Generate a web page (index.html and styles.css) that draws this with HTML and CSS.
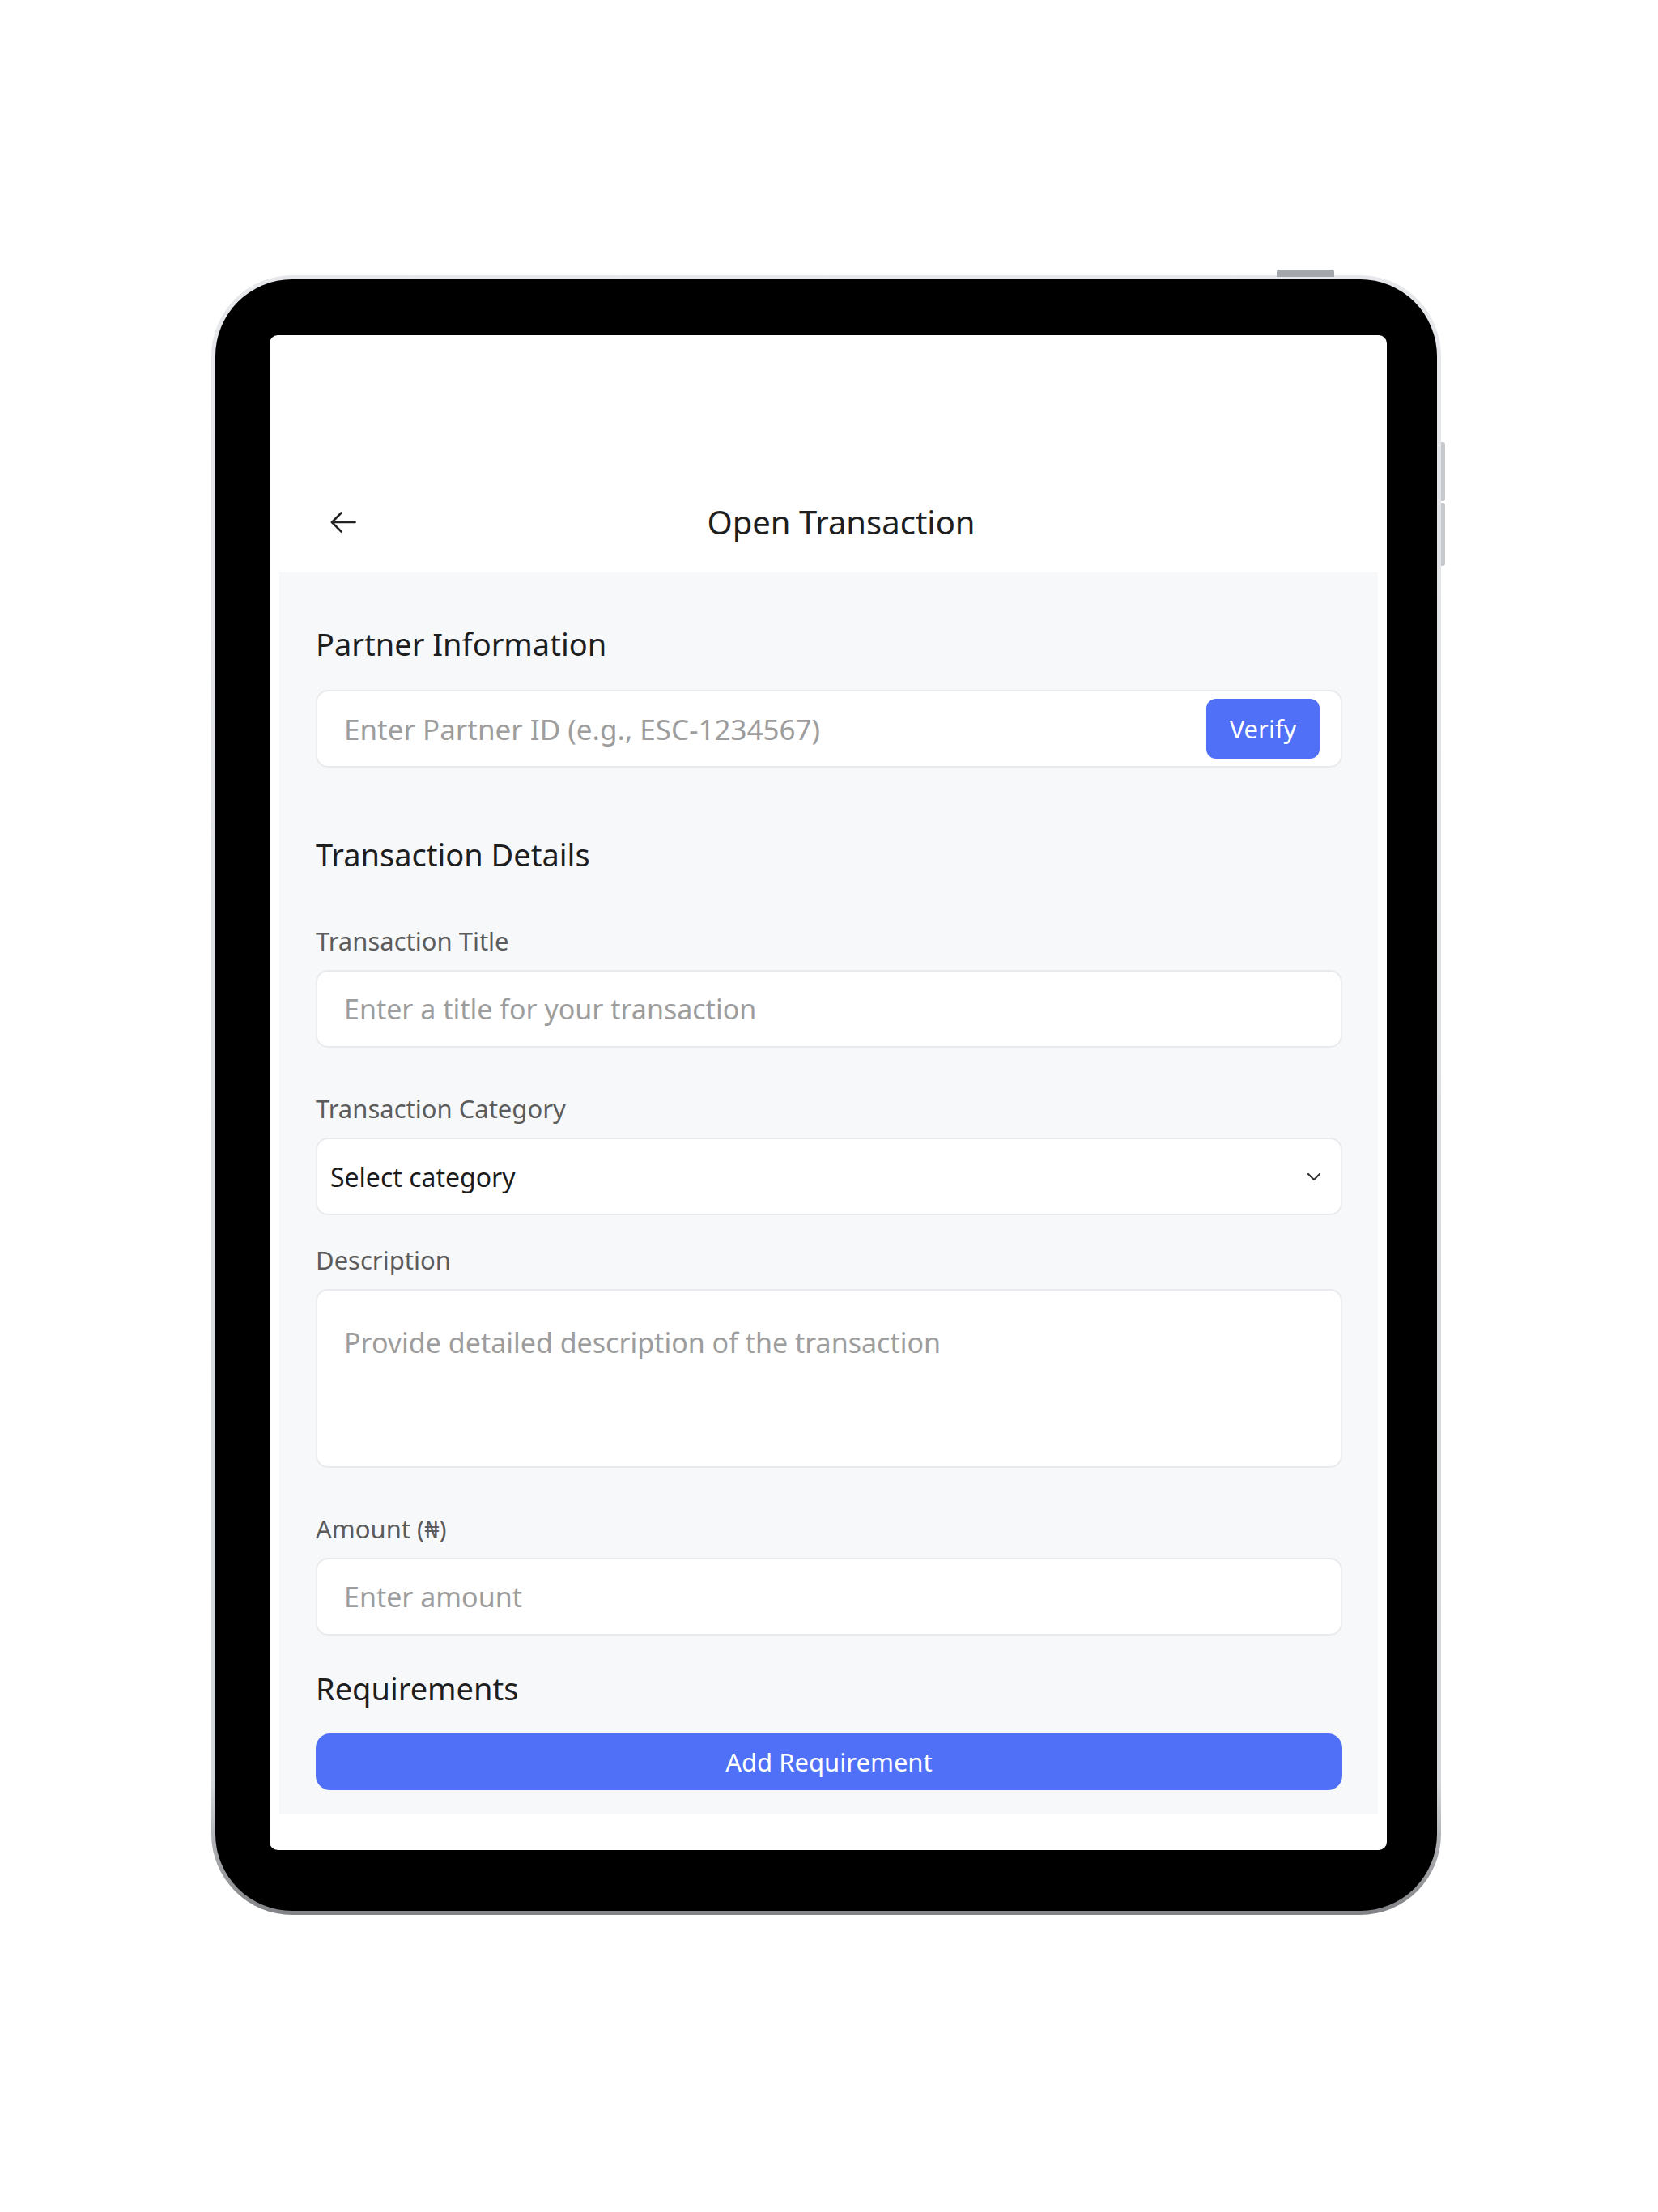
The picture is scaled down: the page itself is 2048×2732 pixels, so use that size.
FILE: index.html
```html
<!DOCTYPE html>
<html lang="en">
<head>
    <meta charset="UTF-8">
    <meta name="viewport" content="width=device-width, initial-scale=1">
    <title>Open Transaction</title>
    <link rel="stylesheet" href="styles.css">
</head>
<body>
    <div class="device">
        <span class="hw-btn top-btn"></span>
        <span class="hw-btn side-btn vol-up"></span>
        <span class="hw-btn side-btn vol-down"></span>
        <div class="bezel">
            <div class="screen">
                <header class="app-header">
                    <div class="header-row">
                        <button class="back-btn" aria-label="Back">
                            <svg width="32" height="26" viewBox="0 0 32 26" fill="none" stroke="#222" stroke-width="2.6" stroke-linecap="round" stroke-linejoin="round">
                                <path d="M30.5 13H2"/>
                                <path d="M13.5 1.5L2 13l11.5 11.5"/>
                            </svg>
                        </button>
                        <h1 class="page-title">Open Transaction</h1>
                    </div>
                </header>

                <main class="form-panel">
                    <h2 class="section-title">Partner Information</h2>
                    <div class="partner-box">
                        <input type="text" id="partnerId" placeholder="Enter Partner ID (e.g., ESC-1234567)">
                        <button class="verify-btn" onclick="verifyPartner()">Verify</button>
                    </div>

                    <h2 class="section-title details-title">Transaction Details</h2>

                    <div class="field first">
                        <label for="txTitle">Transaction Title</label>
                        <input type="text" id="txTitle" class="text-input" placeholder="Enter a title for your transaction">
                    </div>

                    <div class="field">
                        <label for="txCategory">Transaction Category</label>
                        <div class="select-box">
                            <select id="txCategory">
                                <option value="">Select category</option>
                                <option value="goods">Goods</option>
                                <option value="services">Services</option>
                                <option value="digital">Digital Product</option>
                            </select>
                            <svg width="18" height="11" viewBox="0 0 18 11" fill="none" stroke="#333" stroke-width="2.2" stroke-linecap="round" stroke-linejoin="round">
                                <path d="M2 2l7 7 7-7"/>
                            </svg>
                        </div>
                    </div>

                    <div class="field tight">
                        <label for="txDesc">Description</label>
                        <textarea id="txDesc" placeholder="Provide detailed description of the transaction"></textarea>
                    </div>

                    <div class="field">
                        <label for="txAmount">Amount (₦)</label>
                        <input type="number" id="txAmount" class="text-input" placeholder="Enter amount">
                    </div>

                    <h2 class="section-title req-title">Requirements</h2>
                    <button class="add-btn" onclick="addRequirement()">Add Requirement</button>
                </main>
            </div>
        </div>
    </div>
    <script>
        function verifyPartner() {
            let id = document.getElementById('partnerId').value;
            if (!id) {
                alert("Please enter a partner ID.");
                return;
            }
            alert("Verifying " + id + "...");
        }

        function addRequirement() {
            alert("Requirement added.");
        }
    </script>
</body>
</html>
```

FILE: styles.css
```css
body {
    margin: 0;
    background: #fff;
    font-family: "Noto Sans", "Open Sans", Arial, sans-serif;
    color: #222;
}

/* tablet shell */
.device {
    position: relative;
    width: 1519px;
    height: 2025px;
    margin: 340px 0 0 261px;
    padding: 5px;
    box-sizing: border-box;
    border-radius: 100px;
    background: linear-gradient(to bottom, #e6e8eb 0%, #d3d6da 92%, #818285 100%);
}
.bezel {
    height: 100%;
    box-sizing: border-box;
    padding: 69px 62px 75px 67px;
    background: #000;
    border-radius: 95px;
}
.hw-btn {
    position: absolute;
    background: #a4a7ab;
}
.top-btn {
    top: -7px;
    left: 1316px;
    width: 71px;
    height: 9px;
    border-radius: 3px 3px 0 0;
}
.side-btn {
    right: -5px;
    width: 5px;
    border-radius: 0 3px 3px 0;
    background: #c6c9cd;
}
.vol-up {
    top: 206px;
    height: 73px;
}
.vol-down {
    top: 281px;
    height: 78px;
}

.screen {
    height: 100%;
    display: flex;
    flex-direction: column;
    background: #fff;
    border-radius: 10px;
    overflow: hidden;
}

/* header */
.app-header {
    padding: 205px 75px 36px 75px;
}
.header-row {
    display: flex;
    align-items: center;
    height: 52px;
}
.back-btn {
    width: 32px;
    height: 26px;
    padding: 0;
    border: none;
    background: none;
    cursor: pointer;
    display: flex;
}
.page-title {
    flex: 1;
    margin: 0;
    text-align: center;
    font-size: 40px;
    line-height: 52px;
    font-weight: 400;
    color: #1e1e1e;
}

/* form */
.form-panel {
    flex: 1;
    margin: 0 11px 45px 12px;
    padding: 65px 44px 29px 45px;
    background: #f7f8fa;
    display: flex;
    flex-direction: column;
}
.section-title {
    margin: 0;
    font-size: 38px;
    line-height: 46px;
    font-weight: 400;
    color: #1e1e1e;
}
.details-title {
    margin-top: 84px;
}
.req-title {
    margin-top: 42px;
}

.partner-box {
    margin-top: 34px;
    height: 96px;
    box-sizing: border-box;
    display: flex;
    align-items: center;
    padding: 0 26px 0 33px;
    background: #fff;
    border: 2px solid #e8eaed;
    border-radius: 15px;
}
.partner-box input {
    flex: 1;
    border: none;
    outline: none;
    padding: 0;
    background: transparent;
    font-family: inherit;
    font-size: 35px;
    color: #222;
}
.verify-btn {
    width: 140px;
    height: 74px;
    border: none;
    border-radius: 12px;
    background: #5070f8;
    color: #fff;
    font-family: inherit;
    font-size: 31px;
    cursor: pointer;
}

.field {
    display: flex;
    flex-direction: column;
    margin-top: 57px;
}
.field.first {
    margin-top: 66px;
}
.field.tight {
    margin-top: 37px;
}
.field label {
    font-size: 31px;
    line-height: 36px;
    color: #5c5c5c;
    margin-bottom: 18px;
}

.text-input, textarea, .select-box {
    box-sizing: border-box;
    width: 100%;
    background: #fff;
    border: 2px solid #e8eaed;
    border-radius: 15px;
    font-family: inherit;
    font-size: 34px;
    color: #222;
    outline: none;
}
.text-input {
    height: 96px;
    padding: 0 33px;
}
textarea {
    height: 221px;
    padding: 41px 33px 30px;
    line-height: 1.4;
    resize: none;
}
::placeholder {
    color: #9d9d9d;
}
input[type=number]::-webkit-inner-spin-button {
    -webkit-appearance: none;
}

.select-box {
    height: 96px;
    display: flex;
    align-items: center;
    padding: 0 24px 0 16px;
}
.select-box select {
    flex: 1;
    appearance: none;
    -webkit-appearance: none;
    border: none;
    outline: none;
    padding: 0;
    background: transparent;
    font-family: inherit;
    font-size: 32px;
    color: #1a1a1a;
}

.add-btn {
    margin-top: 33px;
    height: 70px;
    border: none;
    border-radius: 18px;
    background: #5070f8;
    color: #fff;
    font-family: inherit;
    font-size: 31px;
    cursor: pointer;
}
```
